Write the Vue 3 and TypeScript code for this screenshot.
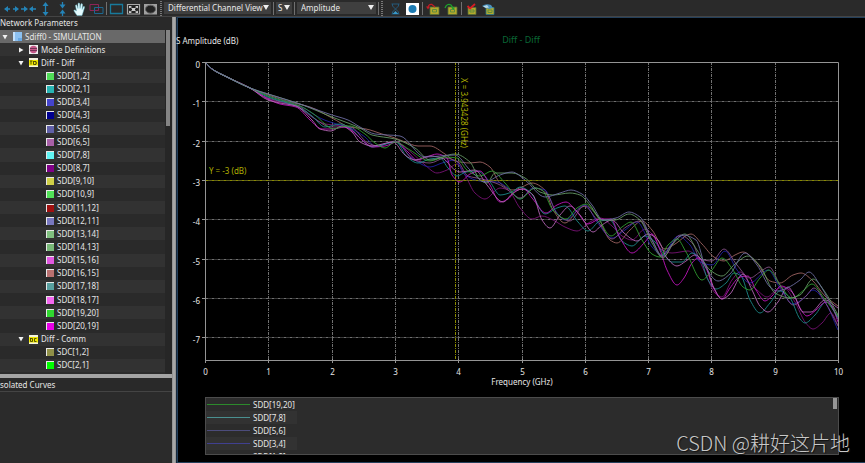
<script setup lang="ts">
import { ref } from 'vue'

interface Row {
  label: string
  level: number
  kind: 'root' | 'mode' | 'dd' | 'dc' | 'curve'
  open?: boolean
  color?: string
}

type Point = [number, number]

const curve = (label: string, color: string): Row => ({ label, color, level: 2, kind: 'curve' })

const rows: Row[] = [
  { label: 'Sdiff0 - SIMULATION', level: 0, kind: 'root', open: true },
  { label: 'Mode Definitions', level: 1, kind: 'mode', open: false },
  { label: 'Diff - Diff', level: 1, kind: 'dd', open: true },
  curve('SDD[1,2]', '#50dc58'),
  curve('SDD[2,1]', '#28b4b4'),
  curve('SDD[3,4]', '#4444cc'),
  curve('SDD[4,3]', '#000090'),
  curve('SDD[5,6]', '#6060a8'),
  curve('SDD[6,5]', '#a860a8'),
  curve('SDD[7,8]', '#60f4f4'),
  curve('SDD[8,7]', '#800088'),
  curve('SDD[9,10]', '#d0d048'),
  curve('SDD[10,9]', '#50e058'),
  curve('SDD[11,12]', '#a01010'),
  curve('SDD[12,11]', '#7878c0'),
  curve('SDD[13,14]', '#80c080'),
  curve('SDD[14,13]', '#78b878'),
  curve('SDD[15,16]', '#e058e0'),
  curve('SDD[16,15]', '#b87070'),
  curve('SDD[17,18]', '#58a0a0'),
  curve('SDD[18,17]', '#f468f0'),
  curve('SDD[19,20]', '#30d830'),
  curve('SDD[20,19]', '#e800e8'),
  { label: 'Diff - Comm', level: 1, kind: 'dc', open: true },
  curve('SDC[1,2]', '#909048'),
  curve('SDC[2,1]', '#00ff00'),
]

const selected = ref(0)

const legend = [
  { label: 'SDD[19,20]', color: '#2c8a2c' },
  { label: 'SDD[7,8]', color: '#4a9090' },
  { label: 'SDD[5,6]', color: '#4c4c7c' },
  { label: 'SDD[3,4]', color: '#404090' },
  { label: 'SDD[1,2]', color: '#3c803c' },
]

const left = 205.5
const right = 838.5
const top = 62
const bottom = 360
const px = (ghz: number): number => Math.round(left + ghz * 63.3 - 0.5) + 0.5
const py = (db: number): number => Math.round(top + db * 39.35)
const xTicks = [0, 1, 2, 3, 4, 5, 6, 7, 8, 9, 10]
const yTicks = [0, 1, 2, 3, 4, 5, 6, 7]

const parse = (s: string): Point[] =>
  s.trim().split(/\s+/).map((p) => p.split(',').map(Number) as Point)

// Monotone cubic interpolation: flat at each local extreme, no overshoot.
function smooth(pts: Point[]): string {
  const n = pts.length
  const slope: number[] = []
  for (let i = 0; i < n - 1; i++) slope.push((pts[i + 1][1] - pts[i][1]) / (pts[i + 1][0] - pts[i][0]))
  const m: number[] = [slope[0]]
  for (let i = 1; i < n - 1; i++) {
    const a = slope[i - 1]
    const b = slope[i]
    m.push(a * b <= 0 ? 0 : (2 * a * b) / (a + b))
  }
  m.push(slope[n - 2])
  let d = `M${pts[0][0]} ${pts[0][1]}`
  for (let i = 0; i < n - 1; i++) {
    const [x0, y0] = pts[i]
    const [x1, y1] = pts[i + 1]
    const h = (x1 - x0) / 3
    d += `C${(x0 + h).toFixed(1)} ${(y0 + m[i] * h).toFixed(1)} ${(x1 - h).toFixed(1)} ${(y1 - m[i + 1] * h).toFixed(1)} ${x1} ${y1}`
  }
  return d
}

const head = '206,63 212,69 227,77 250,88'
const series = [
  { color: '#9c6260', pts: '268,95 290,102 310,107 332,118 350,127 366,129 382,134 395,138 405,142 418,146 430,146 445,154 455,161 470,163 480,162 490,167 500,183 513,190 522,187 532,183 545,190 553,210 565,223 580,208 586,206 597,215 610,240 617,243 630,230 642,221 652,230 665,249 675,244 691,234 702,244 714,257 724,261 735,255 743,252 757,263 770,281 780,283 793,275 801,273 812,280 825,296 838,306' },
  { color: '#781274', pts: '268,99 296,106 312,117 325,124 342,126 352,131 372,146 395,142 412,153 425,165 437,173 447,170 457,164 465,175 475,193 485,199 500,188 508,190 520,208 532,219 542,216 553,220 565,227 577,231 590,222 600,218 612,226 622,236 632,240 645,229 652,234 662,250 672,253 688,251 697,257 706,275 715,293 722,297 732,280 740,272 750,284 757,290 767,297 776,290 783,287 795,302 805,322 813,329 822,323 831,313 838,325' },
  { color: '#2020a4', pts: '268,96 300,106 320,118 330,122 350,128 365,137 375,146 395,142 412,158 430,167 442,163 455,160 465,175 480,181 497,182 508,188 520,199 533,188 545,190 555,210 565,220 585,205 597,222 612,238 625,230 637,222 652,247 662,255 678,236 690,245 700,262 712,265 725,251 737,270 750,283 768,270 780,288 793,304 804,298 813,290 825,302 838,330' },
  { color: '#845084', pts: '268,98 298,106 318,121 330,127 350,127 368,143 378,146 395,141 414,160 430,163 445,158 458,162 468,176 482,179 498,184 508,190 520,198 535,188 547,194 558,215 570,221 584,206 597,220 612,239 626,227 640,221 652,240 663,257 680,235 693,244 700,259 712,261 724,249 737,265 750,278 760,272 769,267 780,285 793,305 806,296 814,288 825,302 838,326' },
  { color: '#1c8888', pts: '268,97 296,106 312,116 325,127 340,124 350,128 362,140 372,147 382,145 396,142 407,157 418,163 430,159 440,158 448,168 457,176 466,172 477,171 490,182 500,195 512,192 520,187 530,192 545,214 557,208 565,206 578,222 588,231 600,221 610,220 622,241 632,246 645,236 655,242 665,256 672,262 682,262 692,253 700,258 708,280 716,289 726,283 734,273 741,276 750,300 760,313 770,303 780,291 790,298 800,319 805,323 815,315 826,302 838,317' },
  { color: '#c014bc', pts: '268,99 280,104 296,107 310,120 322,129 332,129 345,127 350,129 362,140 373,147 385,146 397,142 408,152 417,160 427,157 437,154 447,158 452,175 460,182 470,174 480,171 490,185 500,202 508,199 517,190 524,189 532,198 546,213 557,205 566,202 577,212 588,224 600,219 611,219 620,238 632,253 645,242 652,234 660,250 667,270 677,285 684,278 692,263 698,258 706,268 713,287 722,299 730,288 740,277 748,276 756,290 765,301 772,296 781,286 792,292 800,308 807,316 816,310 826,302 832,306 838,322' },
  { color: '#b464b4', pts: '268,100 280,103 296,106 312,120 320,129 331,131 342,126 352,132 360,142 372,146 393,142 405,155 415,160 430,156 442,158 455,170 460,172 475,170 487,185 503,202 512,194 522,189 533,195 542,220 550,228 560,215 570,206 580,215 593,232 602,225 612,220 624,233 637,241 648,234 658,240 667,258 677,266 686,261 695,255 705,264 714,288 722,299 730,294 743,274 752,290 760,306 768,312 778,302 788,287 795,297 803,312 811,312 825,300 838,308' },
  { color: '#309c30', pts: '268,96 300,106 315,115 325,124 333,129 345,126 350,126 365,134 375,143 385,148 395,142 410,150 430,161 445,157 457,158 467,170 480,176 492,171 505,183 520,199 535,188 542,190 553,210 566,219 577,208 586,204 597,216 611,236 622,227 631,222 642,240 652,254 660,257 668,245 677,239 686,252 702,280 712,270 722,258 733,270 743,287 750,290 760,278 769,270 780,285 792,298 804,290 812,284 824,298 838,316' },
  { color: '#649864', pts: '268,94 300,104 332,117 348,123 360,128 372,135 395,139 415,148 430,160 455,154 470,162 480,180 487,183 495,173 512,173 525,178 540,192 553,195 570,193 580,195 590,205 602,220 615,220 629,214 640,220 652,243 663,258 672,245 685,234 697,250 710,270 722,276 735,264 748,256 760,266 775,293 790,298 800,295 813,279 825,292 838,315' },
  { color: '#6c6ca0', pts: '268,94 300,104 332,115 348,120 360,127 375,134 400,136 425,157 455,155 470,170 485,182 500,175 512,172 525,180 545,197 560,193 571,190 582,194 592,205 603,220 616,218 629,212 640,217 652,240 662,256 672,244 683,235 696,240 706,268 718,281 730,274 745,253 757,265 770,287 777,291 787,288 800,280 809,272 820,285 838,319' },
].map((s) => ({ color: s.color, d: smooth(parse(`${head} ${s.pts}`)) }))
</script>

<template>
  <div class="app">
    <header class="toolbar">
      <button class="tool" aria-label="Expand horizontally">
        <svg viewBox="0 0 15 15"><path d="M1 8H6M9 8H14" class="b" /><path d="M0 8 4 5V11ZM15 8 11 5V11Z" class="bf" /></svg>
      </button>
      <button class="tool" aria-label="Shrink horizontally">
        <svg viewBox="0 0 15 15"><path d="M0 8H5M10 8H15" class="b" /><path d="M7 8 3 5V11ZM8 8 12 5V11Z" class="bf" /></svg>
      </button>
      <button class="tool" aria-label="Expand vertically">
        <svg viewBox="0 0 15 15"><path d="M7.500 3V13" class="b" /><path d="M7.500 1 4.500 5H10.500ZM7.500 15 4.500 11H10.500Z" class="bf" /></svg>
      </button>
      <button class="tool" aria-label="Shrink vertically">
        <svg viewBox="0 0 15 15"><path d="M7.500 1V5M7.500 11V15" class="b" /><path d="M7.500 7.500 4.500 3.500H10.500ZM7.500 8.500 4.500 12.500H10.500Z" class="bf" /></svg>
      </button>
      <button class="tool" aria-label="Pan">
        <svg viewBox="0 0 15 15"><path d="M5 14.500 2 10Q1.500 8.500 3 9L4.500 10 3.500 4.500Q4 3 5 4.500L6 7.500 6 2.500Q7 1.300 7.700 2.500L8 7.500 9 3Q10 2 10.500 3.500L10 8.500 11.500 5.500Q12.800 5 12.500 6.500L11 11.500 10 14.500Z" fill="#e4fbff" stroke="#6fbccc" stroke-width=".5" /></svg>
      </button>
      <button class="tool" aria-label="Zoom region">
        <svg viewBox="0 0 15 15"><path d="M1 3.500H9.500V9.500H1Z" fill="none" stroke="#8c2458" /><path d="M5.500 6.500H14V12.500H5.500Z" fill="none" stroke="#1c6890" /></svg>
      </button>
      <span class="sep"></span>
      <button class="tool" aria-label="Zoom rectangle">
        <svg viewBox="0 0 15 15"><path d="M1.500 3.500H13.500V12.500H1.500Z" fill="none" stroke="#187a9c" stroke-width="1.300" /></svg>
      </button>
      <button class="tool" aria-label="Fit all">
        <svg viewBox="0 0 15 15"><path d="M1.500 3.500H13.500V13H1.500Z" fill="#222" stroke="#a8a8a8" stroke-width="1.200" /><path d="M3 5H6L3 7.500ZM12 5H9L12 7.500ZM3 12H6L3 9.500ZM12 12H9L12 9.500Z" fill="#ccc" /><path d="M4 6 11 11M11 6 4 11" stroke="#bbb" /><path d="M6 7H9V10H6Z" fill="#ccc" /></svg>
      </button>
      <button class="tool" aria-label="Fit circle">
        <svg viewBox="0 0 15 15"><path d="M1 3H14V13.500H1Z" fill="#a0a0a0" /><ellipse cx="7.500" cy="8.200" rx="5" ry="4" fill="#222" stroke="#666" /></svg>
      </button>
      <span class="grip"></span>
      <span class="pick wide">
        <select aria-label="View"><option>Differential Channel View</option></select>
        <svg viewBox="0 0 6 6"><path d="M0 1H6L3 6Z" fill="#eee" /></svg>
      </span>
      <span class="sep"></span>
      <span class="pick tiny">
        <select aria-label="Parameter"><option>S</option></select>
        <svg viewBox="0 0 6 6"><path d="M0 1H6L3 6Z" fill="#eee" /></svg>
      </span>
      <span class="sep"></span>
      <span class="pick mid">
        <select aria-label="Quantity"><option>Amplitude</option></select>
        <svg viewBox="0 0 6 6"><path d="M0 1H6L3 6Z" fill="#eee" /></svg>
      </span>
      <span class="sep"></span>
      <span class="grip"></span>
      <button class="tool gap" aria-label="Wait">
        <svg viewBox="0 0 15 15"><path d="M3.500 3H11.500M3.500 13H11.500M4.500 3V5L10.500 11V13M10.500 3V5L4.500 11V13" fill="none" stroke="#245878" /><path d="M4.500 13 7.500 10 10.500 13Z" fill="#3898c8" /></svg>
      </button>
      <button class="tool" aria-label="Marker">
        <svg viewBox="0 0 15 15"><path d="M1 2H14V14H1Z" fill="#fff" /><circle cx="7.500" cy="8" r="4" fill="#1c7cb4" /></svg>
      </button>
      <span class="sep"></span>
      <button class="tool wider" aria-label="Undo lock">
        <svg viewBox="0 0 15 15"><path d="M4 6H13V13.500H4Z" fill="#b4a82c" stroke="#547038" stroke-width=".8" /><path d="M6.500 8.500H10.500V11H6.500Z" fill="none" stroke="#5c8c40" /><path d="M2 7Q2 3 6 3.500L9 6" fill="none" stroke="#c41c24" stroke-width="1.300" /><path d="M0 5.500H4L2 8.500Z" fill="#c41c24" /></svg>
      </button>
      <button class="tool wider" aria-label="Redo lock">
        <svg viewBox="0 0 15 15"><path d="M4 6H13V13.500H4Z" fill="#b4a82c" stroke="#547038" stroke-width=".8" /><path d="M6.500 8.500H10.500V11H6.500Z" fill="none" stroke="#5c8c40" /><path d="M1 7Q3 2 7 4L9 7" fill="none" stroke="#1ca42c" stroke-width="1.300" /><path d="M7 6.500H11L9.500 9Z" fill="#1ca42c" /></svg>
      </button>
      <span class="sep"></span>
      <button class="tool" aria-label="Apply lock">
        <svg viewBox="0 0 15 15"><path d="M4 6.500H12V13.500H4Z" fill="#b4a82c" stroke="#547038" stroke-width=".8" /><path d="M6 9H10V11H6Z" fill="none" stroke="#5c8c40" /><path d="M3.500 5 6 7.500 11 3" fill="none" stroke="#d81c24" stroke-width="1.800" /></svg>
      </button>
      <button class="tool" aria-label="View lock">
        <svg viewBox="0 0 15 15"><path d="M5 6.500H13V13.500H5Z" fill="#b4a82c" stroke="#2c7888" stroke-width=".8" /><path d="M7 9H11V11.500H7Z" fill="none" stroke="#5c8c40" /><path d="M1 5Q5 2 10 4L12 7 8 8 5 7Z" fill="#4890bc" /><path d="M2 5.500 6 4 8 6.500 5 7Z" fill="#b8d8e8" /></svg>
      </button>
    </header>

    <div class="body">
      <aside class="side">
        <section class="network">
          <h2>Network Parameters</h2>
          <div class="scroller">
            <ul class="tree">
              <li
                v-for="(row, i) in rows"
                :key="row.label"
                :class="['row', 'l' + row.level, { on: selected === i }]"
                @click="selected = i"
              >
                <button v-if="row.open !== undefined" class="twist" :aria-label="row.label + ' toggle'">
                  <svg viewBox="0 0 6 6"><path :d="row.open ? 'M.5 1H5.500L3 5.500Z' : 'M1 .5V5.500L5.500 3Z'" fill="#f0f0f0" /></svg>
                </button>
                <span v-if="row.kind === 'curve'" class="swatch" :style="{ background: row.color }"></span>
                <svg v-else class="glyph" viewBox="0 0 9 9">
                  <template v-if="row.kind === 'root'">
                    <path d="M0 0H9V9H0Z" fill="#8cc0f0" /><path d="M0 0H2V9H0Z" fill="#c4e0fa" /><path d="M5 6H9V9H5Z" fill="#68a8e4" />
                  </template>
                  <template v-else-if="row.kind === 'mode'">
                    <path d="M0 0H9V9H0Z" fill="#eee" /><circle cx="4.500" cy="4.500" r="3.700" fill="#c45888" /><path d="M1 3.500H8M1 5.500H8" stroke="#602848" stroke-width=".8" />
                  </template>
                  <template v-else>
                    <path d="M0 0H9V9H0Z" fill="#f4f4e0" /><path d="M0 2H9V7.500H0Z" fill="#f0e800" />
                    <path v-if="row.kind === 'dd'" d="M1 3H3.500M2 3V6.500M4.500 3V6.500H7V3.500H5M7 5H8" fill="none" stroke="#444400" stroke-width=".9" />
                    <path v-else d="M1.500 3V6.500H3.500V3.500H1M7.500 3.500H5.500V6.500H7.500" fill="none" stroke="#444400" stroke-width=".9" />
                  </template>
                </svg>
                <span class="name">{{ row.label }}</span>
              </li>
            </ul>
            <div class="rail"><div class="thumb"></div></div>
          </div>
        </section>
        <section class="isolated">
          <h2>solated Curves</h2>
        </section>
      </aside>
      <div class="splitter"></div>

      <main class="view">
        <svg class="chart" viewBox="178 18 687 373" role="img" aria-label="Diff - Diff">
          <text x="521" y="43" class="title">Diff - Diff</text>
          <text x="176" y="44" class="lbl">S Amplitude (dB)</text>
          <g class="grid">
            <line v-for="t in xTicks.slice(1, -1)" :key="'x' + t" :x1="px(t)" :x2="px(t)" :y1="top" :y2="bottom" />
            <line v-for="t in yTicks.slice(1)" :key="'y' + t" :x1="left" :x2="right" :y1="py(t) + 0.5" :y2="py(t) + 0.5" />
          </g>
          <path v-for="s in series" :key="s.color" :d="s.d" :stroke="s.color" class="curve" />
          <g class="marker">
            <line :x1="left" :x2="right" y1="180.500" y2="180.500" />
            <line x1="455.500" x2="455.500" :y1="top" :y2="bottom" />
          </g>
          <path class="axis" :d="`M${left} ${top + 0.5}H${right}V${bottom + 0.5}H${left}Z`" />
          <g class="axis">
            <line v-for="t in xTicks" :key="'a' + t" :x1="px(t)" :x2="px(t)" y1="359" y2="363" />
            <line v-for="t in yTicks" :key="'b' + t" x1="202" x2="206" :y1="py(t) + 0.5" :y2="py(t) + 0.5" />
          </g>
          <text v-for="t in xTicks" :key="'p' + t" :x="px(t)" y="375" class="lbl mid">{{ t }}</text>
          <text v-for="t in yTicks" :key="'q' + t" x="200" :y="py(t) + 6" class="lbl end">{{ t ? -t : 0 }}</text>
          <text x="522" y="385" class="lbl mid">Frequency (GHz)</text>
          <text x="209" y="174" class="lbl note">Y = -3 (dB)</text>
          <text transform="translate(461 78) rotate(90)" class="lbl note">X = 3.943428 (GHz)</text>
        </svg>

        <div class="legend">
          <ul>
            <li v-for="item in legend" :key="item.label">
              <i :style="{ background: item.color }"></i>{{ item.label }}
            </li>
          </ul>
          <div class="knob"></div>
        </div>
        <div class="mark">CSDN @耕好这片地</div>
      </main>
    </div>
  </div>
</template>

<style>
body {
  background: #000;
}
</style>

<style scoped>
.app {
  display: flex;
  flex-direction: column;
  min-height: 100vh;
  background: #2b2b2b;
  color: #e6e6e6;
  font: 8px/12px 'Noto Sans', 'Open Sans', sans-serif;
  overflow: hidden;
}
button {
  padding: 0;
  border: 0;
  background: none;
}
ul {
  margin: 0;
  padding: 0;
  list-style: none;
}
.toolbar {
  display: flex;
  align-items: center;
  gap: 2px;
  height: 16px;
  padding-left: 4px;
  background: #2a2a2a;
  border-bottom: 1px solid #444;
}
.tool {
  flex: none;
  width: 15px;
  height: 15px;
}
.wider {
  margin-left: 1px;
}
.gap {
  margin-left: 3px;
}
.tool svg,
.twist svg {
  display: block;
  width: 100%;
  height: 100%;
}
.b {
  stroke: #2484b8;
  stroke-width: 1.3;
}
.bf {
  fill: #2484b8;
}
.sep {
  flex: none;
  width: 1px;
  height: 13px;
  background: #707070;
}
.grip {
  flex: none;
  width: 2px;
  height: 15px;
  background: repeating-linear-gradient(#777 0 1px, #2a2a2a 1px 2px);
}
.pick {
  position: relative;
  flex: none;
  height: 12px;
}
.pick select {
  display: block;
  width: 100%;
  height: 12px;
  padding: 0 0 0 4px;
  appearance: none;
  border: 0;
  background: #3f3f3f;
  color: #e8e8e8;
  font: inherit;
}
.pick svg {
  position: absolute;
  right: 2px;
  top: 2px;
  width: 6px;
  height: 6px;
  pointer-events: none;
}
.wide {
  width: 107px;
}
.tiny {
  width: 16px;
}
.tiny select {
  padding-left: 2px;
}
.mid {
  width: 79px;
}
.body {
  display: flex;
  flex: 1;
}
.side {
  display: flex;
  flex-direction: column;
  flex: none;
  width: 172px;
}
.network {
  display: flex;
  flex-direction: column;
  flex: 1;
}
h2 {
  margin: 0;
  height: 13px;
  background: #292929;
  font: inherit;
  white-space: nowrap;
}
.scroller {
  display: flex;
  flex: 1;
}
.tree {
  display: grid;
  flex: 1;
  grid-auto-rows: 1fr;
  padding-bottom: 2px;
}
.row {
  display: flex;
  align-items: center;
  gap: 3px;
  min-height: 13px;
  padding-left: 46px;
  background: #2a2a2a;
  white-space: nowrap;
}
.row:nth-child(even) {
  background: #323232;
}
.row.on {
  background: #696969;
}
.l0 {
  padding-left: 2px;
}
.l1 {
  padding-left: 18px;
}
.twist {
  width: 6px;
  height: 6px;
}
.l0 .twist,
.l1 .twist {
  margin-right: 2px;
}
.swatch {
  box-sizing: border-box;
  width: 8px;
  height: 8px;
  border-top: 1px solid #e8e8e8;
  border-left: 1px solid #e8e8e8;
}
.glyph {
  width: 9px;
  height: 9px;
}
.rail {
  width: 7px;
  background: #262626;
}
.thumb {
  width: 4px;
  height: 28%;
  margin-left: 1px;
  background: #848484;
}
.isolated {
  height: 85px;
  border-top: 4px solid #a4a4a4;
}
.isolated h2 {
  padding-top: 1px;
  height: 12px;
  border-bottom: 1px solid #444;
}
.splitter {
  width: 4px;
  background: linear-gradient(90deg, #8c8c8c, #b0b0b0 50%, #8c8c8c);
  border-right: 1px solid #16283c;
}
.view {
  position: relative;
  flex: 1;
  min-width: 0;
  background: #000;
  border: solid #24405c;
  border-width: 1px 0 1px 1px;
}
.chart {
  display: block;
  width: 100%;
  overflow: visible;
}
.chart text {
  font-size: 8px;
  fill: #e6e6e6;
}
.chart .title {
  font-size: 9px;
  fill: #0a6836;
  text-anchor: middle;
}
.chart .mid {
  text-anchor: middle;
}
.chart .end {
  text-anchor: end;
}
.chart .note {
  fill: #b0b000;
}
.grid line {
  stroke: #707070;
  stroke-dasharray: 3 1 1 1;
}
.marker line {
  stroke: #8a8a00;
  stroke-dasharray: 3 1 1 1;
}
.curve {
  fill: none;
  stroke-width: 1;
  stroke-opacity: 0.9;
}
.axis {
  fill: none;
  stroke: #949494;
}
.legend {
  display: flex;
  justify-content: space-between;
  height: 56px;
  margin: 6px 26px 6px 27px;
  overflow: hidden;
  border: 1px solid #4c4c4c;
  background: #2c2c2c;
}
.legend ul {
  width: 91px;
}
.legend li {
  display: flex;
  align-items: center;
  gap: 3px;
  height: 13px;
  padding-left: 1px;
  white-space: nowrap;
}
.legend li:nth-child(even) {
  background: #323232;
}
.legend i {
  width: 43px;
  height: 1px;
}
.knob {
  width: 4px;
  height: 11px;
  margin-right: 1px;
  background: #969696;
}
.mark {
  position: absolute;
  right: 15px;
  bottom: 5px;
  color: #c8c8c8;
  font: 20px/28px 'Noto Sans CJK SC', sans-serif;
  font-weight: 300;
  text-shadow: 1px 1px 1px #111;
  white-space: nowrap;
}
</style>
